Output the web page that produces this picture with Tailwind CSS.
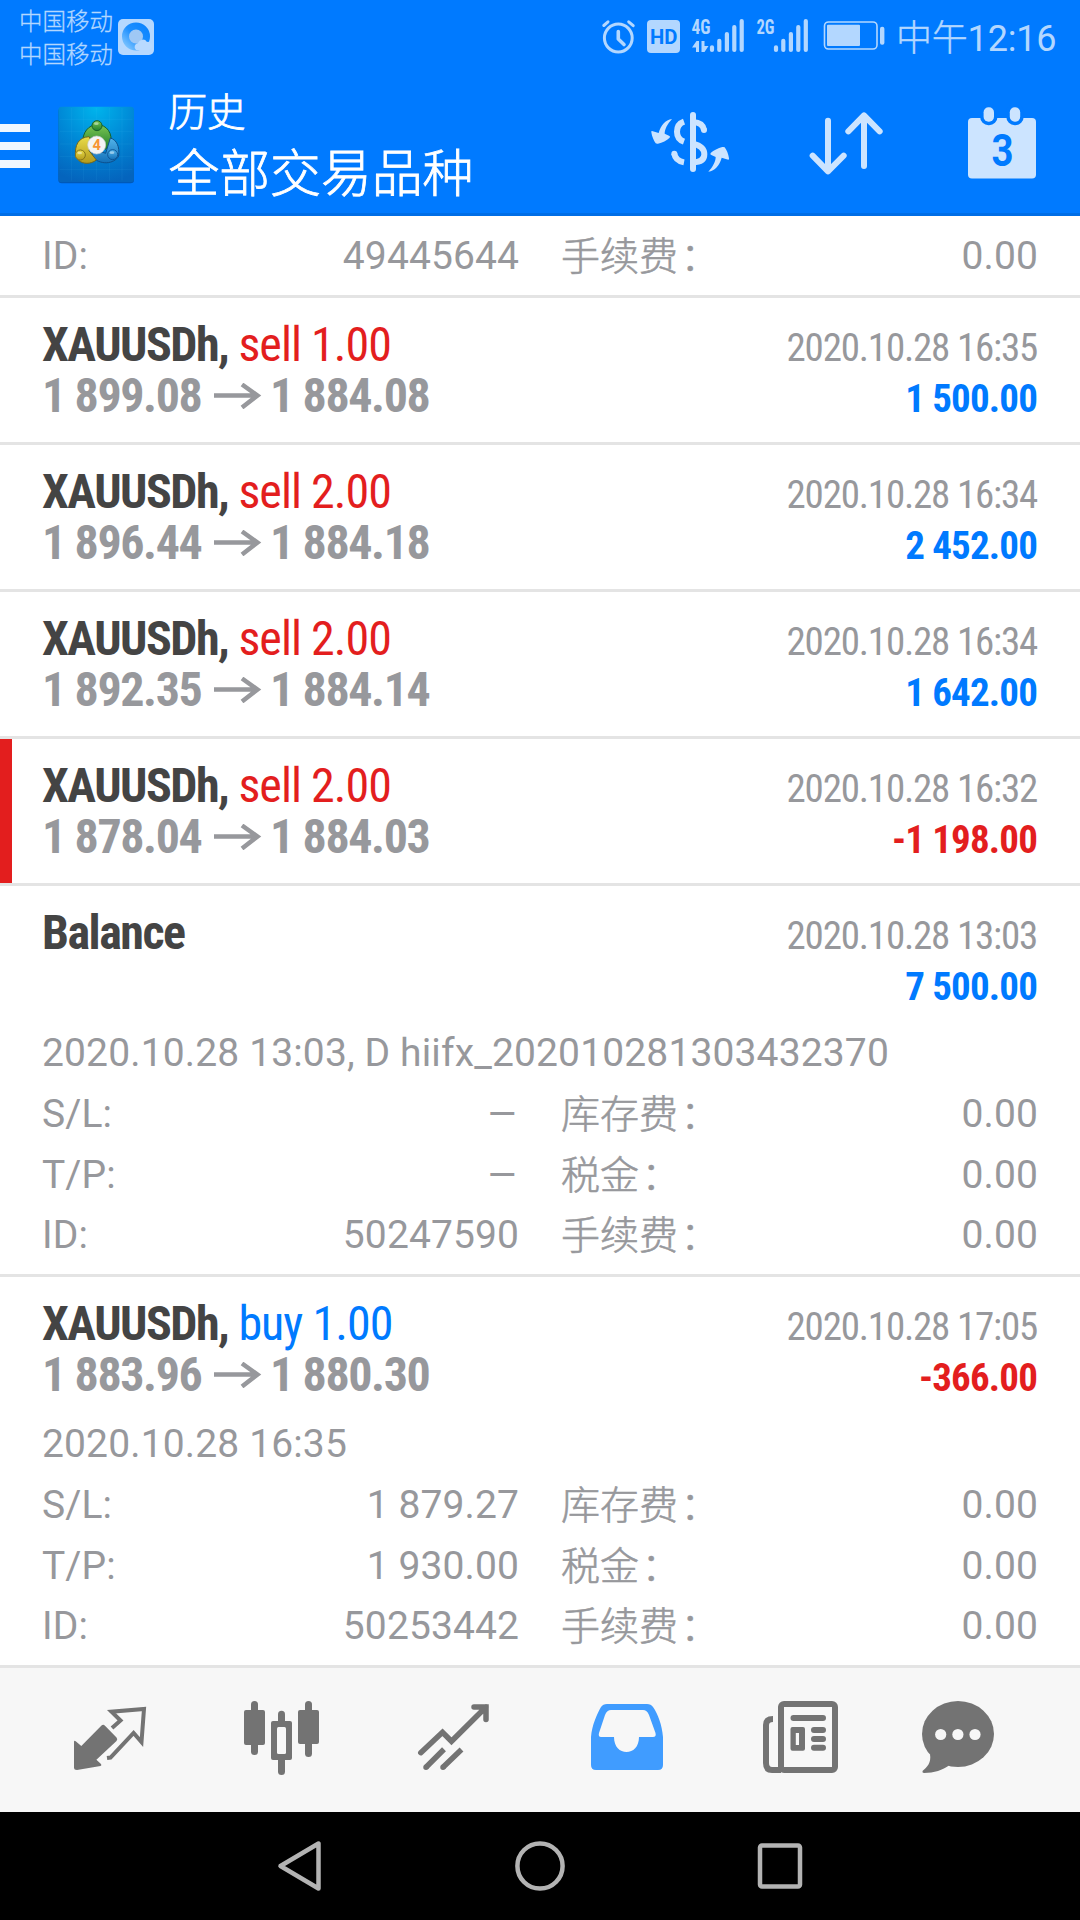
<!DOCTYPE html>
<html lang="zh-CN">
<head>
<meta charset="utf-8">
<title>历史</title>
<script src="https://cdn.jsdelivr.net/npm/@tailwindcss/browser@4"></script>
</head>
<body class="w-[1080px] h-[1920px] overflow-hidden bg-white font-['Roboto','Noto_Sans_CJK_SC',sans-serif] flex flex-col">

<header class="h-[216px] shrink-0 bg-[#007aff] border-b-[3px] border-[#006ee6] flex flex-col">
  <!-- status bar -->
  <div class="h-[74px] flex items-center text-[#b3d7ff]">
    <div class="ml-[19px] w-[99px] pt-[3px] text-[23.5px] leading-[33px] font-light [-webkit-text-stroke:0.3px]">
      <div>中国移动</div>
      <div>中国移动</div>
    </div>
    <svg class="w-9 h-9" viewBox="0 0 36 36">
      <defs>
        <linearGradient id="q" x1="1" y1="0" x2="0" y2="1"><stop offset="0" stop-color="#0b84ff"/><stop offset=".5" stop-color="#1d8fff"/><stop offset="1" stop-color="#7cc4ff"/></linearGradient>
      </defs>
      <rect width="36" height="36" rx="5" fill="#b5d8ff"/>
      <circle cx="18" cy="17.500" r="10.500" fill="#9fc8f5" stroke="url(#q)" stroke-width="7"/>
      <path d="M18 31a4 4 0 0 1 2-7 5 5 0 0 1 9-1 4 4 0 0 1 2 8z" fill="#b9daff"/>
    </svg>
    <svg class="ml-[446px] w-[290px] h-[60px]" viewBox="600 7 290 60" fill="#b3d7ff">
      <g fill="none" stroke="#b3d7ff" stroke-linecap="round">
        <circle cx="618.300" cy="38" r="13.900" stroke-width="3"/>
        <path d="M618.300 31.500V39L624 44.500" stroke-width="3.600" stroke-linejoin="round"/>
        <path d="M603.800 25.500L608 21.800M628.700 21.800L633.200 25.700" stroke-width="3"/>
      </g>
      <rect x="647" y="20" width="33" height="33" rx="4"/>
      <text x="650" y="44" fill="#007aff" class="font-['Roboto'] font-bold text-[20.5px]" textLength="27.500" lengthAdjust="spacingAndGlyphs">HD</text>
      <text x="691.500" y="34" class="font-['Roboto_Condensed','Roboto'] font-bold text-[20.5px]" textLength="19" lengthAdjust="spacingAndGlyphs">4G</text>
      <path d="M692 47.500L696.500 41H699V52H696V47.500ZM701.500 41H704.500V46H708.500L704.500 52H701.500Z"/>
      <g stroke="#b3d7ff" stroke-width="4.200" stroke-linecap="round">
        <path d="M712 47.300V49.900M719.300 40.800V49.900M726.900 34V49.900M734.300 27V49.900M741.700 21V49.900"/>
        <path d="M776 47.300V49.900M783.300 40.800V49.900M790.900 34V49.900M798.300 27V49.900M805.800 21V49.900"/>
      </g>
      <text x="756.500" y="34" class="font-['Roboto_Condensed','Roboto'] font-bold text-[20.5px]" textLength="18" lengthAdjust="spacingAndGlyphs">2G</text>
      <rect x="824.500" y="22" width="52.500" height="27" rx="4" fill="none" stroke="#b3d7ff" stroke-width="1.600"/>
      <rect x="827" y="24.700" width="33" height="21.300" rx="1"/>
      <rect x="880" y="26.700" width="4.400" height="18" rx="2"/>
    </svg>
    <div class="ml-[6px] pt-[3px] text-[36px] leading-[48px] tracking-[-0.2px] font-light whitespace-nowrap"><span class="[-webkit-text-stroke:0.4px]">中午</span><span class="font-normal">12:16</span></div>
  </div>

  <!-- app bar -->
  <div class="h-[139px] flex items-start">
    <div class="mt-[50px] w-[30px] flex flex-col gap-[10px]">
      <div class="h-2 bg-[#f0f7ff]"></div>
      <div class="h-2 bg-[#f0f7ff]"></div>
      <div class="h-2 bg-[#f0f7ff]"></div>
    </div>
    <svg class="ml-[20px] mt-[26px] w-[90px] h-[90px]" viewBox="-1 -2 270 270">
      <defs>
        <radialGradient id="bg" cx=".5" cy=".02" r="1"><stop offset="0" stop-color="#00b4ec"/><stop offset=".5" stop-color="#0088d6"/><stop offset="1" stop-color="#0464bd"/></radialGradient>
        <linearGradient id="gr" x1="0" y1="0" x2="0" y2="1"><stop offset="0" stop-color="#7cc653"/><stop offset="1" stop-color="#1f7f2c"/></linearGradient>
        <linearGradient id="ye" x1="0" y1="0" x2="0" y2="1"><stop offset="0" stop-color="#e9dc49"/><stop offset="1" stop-color="#b39a1c"/></linearGradient>
        <linearGradient id="bl" x1="0" y1="0" x2="0" y2="1"><stop offset="0" stop-color="#52b4ea"/><stop offset="1" stop-color="#126fb8"/></linearGradient>
      </defs>
      <rect x="24" y="23" width="227" height="225" rx="10" fill="#0059b8"/>
      <rect x="24" y="18" width="227" height="226" rx="10" fill="url(#bg)"/>
      <path d="M28 56H246M28 92H246M28 130H246M28 168H246M28 206H246M64 22V240M100 22V240M139 22V240M177 22V240M215 22V240" stroke="#5fd0ff" stroke-opacity=".13" stroke-width="2"/>
      <g stroke-width="3">
        <path d="M98 128C94 96 116 72 140 72C170 72 188 98 181 132L165 146L150 110H126Z" fill="url(#gr)" stroke="#17602a"/>
        <path d="M180 112C200 118 208 138 205 166C192 190 150 196 122 166L136 148L166 158Z" fill="url(#bl)" stroke="#0d4f8c"/>
        <path d="M76 168C72 134 84 110 116 108L126 126L116 150L138 178C120 192 98 190 86 180Z" fill="url(#ye)" stroke="#73661a"/>
        <circle cx="140" cy="75" r="15" fill="url(#gr)" stroke="#17602a"/>
        <circle cx="90" cy="163" r="15" fill="url(#ye)" stroke="#85741a"/>
        <circle cx="187" cy="162" r="15" fill="url(#bl)" stroke="#0d5698"/>
      </g>
      <g fill="#fff" fill-opacity=".45"><ellipse cx="138" cy="69" rx="7" ry="4"/><ellipse cx="88" cy="157" rx="7" ry="4"/><ellipse cx="185" cy="156" rx="7" ry="4"/></g>
      <circle cx="139" cy="133" r="27" fill="#f4f4f4" stroke="#c9cdd0" stroke-width="2"/>
      <text x="139" y="149" text-anchor="middle" fill="#f79433" class="font-['Roboto'] font-bold text-[44px]">4</text>
    </svg>
    <div class="ml-[28.5px] w-[473.5px] text-white font-light [-webkit-text-stroke:0.8px]">
      <div class="mt-[15px] text-[38.6px] leading-[48px]">历史</div>
      <div class="mt-[6px] text-[50.8px] leading-[64px]">全部交易品种</div>
    </div>
    <svg class="mt-[26px] -ml-[2px] w-[260px] h-[90px]" viewBox="0 0 780 270" fill="#cce4ff" stroke="none">
      <g fill="none" stroke="#cce4ff" stroke-width="18" stroke-linejoin="round">
        <path d="M159 45V207" stroke-linecap="round"/>
        <path d="M132 65C104 75 104 115 132 125M103 161C105 176 116 184 132 187"/>
        <path d="M159 66C178 67 190 76 192 90M159 131C184 137 193 150 193 163C193 178 182 187 159 187"/>
        <path d="M564 62V214M518 167L564 214L611 167M672 198V47M625 94L672 46L719 94" stroke-linecap="round"/>
      </g>
      <circle cx="103" cy="161" r="9"/><circle cx="192" cy="90" r="9"/>
      <path id="swap" d="M96 57C76 60 62 76 56 99L36 93Q33 93 34 97C36 110 41 122 47 130Q50 132 54 131C67 128 80 121 89 113Q92 109 87 107L74 101C74 88 82 72 96 57Z"/>
      <use href="#swap" transform="rotate(180 150.500 136)"/>
    </svg>
    <svg class="mt-[26px] ml-[60px] w-[90px] h-[90px]" viewBox="960 100 90 90" fill="#cce4ff">
      <rect x="968" y="118" width="68" height="60.500" rx="4"/>
      <g stroke="#007aff" stroke-width="7"><rect x="983.600" y="107.300" width="10.400" height="14.400" rx="5"/><rect x="1009.800" y="107.300" width="10.400" height="14.400" rx="5"/></g>
      <rect x="983.600" y="107.300" width="10.400" height="14.400" rx="5"/><rect x="1009.800" y="107.300" width="10.400" height="14.400" rx="5"/>
      <text x="991.500" y="165.500" fill="#007aff" class="font-['Roboto'] font-bold text-[44px]" textLength="22" lengthAdjust="spacingAndGlyphs">3</text>
    </svg>
  </div>
</header>

<main id="history" class="flex-1 flex flex-col text-[39px] text-[#97989c]"></main>

<!-- tab bar -->
<nav class="h-36 shrink-0 bg-[#f7f7f7] flex items-center pl-[65px] gap-[82px]">
  <svg class="w-[90px] h-[90px]" viewBox="65 1695 90 90" fill="#737373">
    <path d="M101.500 1725.500Q103.300 1724 105 1725.700L116.500 1737.500Q118 1739.300 116.500 1741L96.400 1759.700L101 1764Q102 1765.500 100.500 1766L77 1770Q74 1770 74 1767.500V1742Q74 1740 76 1741.500L81.300 1746Z"/>
    <path d="M112 1728L120.500 1720.500L111.500 1711.700L144 1709L141.500 1742L133.600 1733L110.500 1757.500L107 1758" fill="none" stroke="#737373" stroke-width="4"/>
  </svg>
  <svg class="w-[90px] h-[90px]" viewBox="237 1695 90 90" fill="#737373">
    <rect x="244" y="1710" width="21" height="35" rx="2"/><rect x="251" y="1701" width="7" height="54" rx="3.500"/>
    <rect x="298" y="1710" width="21" height="34" rx="2"/><rect x="305" y="1701" width="7" height="56" rx="3.500"/>
    <rect x="278" y="1710.700" width="7" height="64.300" rx="3.500"/><rect x="271" y="1721" width="21" height="39" rx="2"/>
    <rect x="277" y="1727" width="9" height="27" rx="1.500" fill="#f7f7f7"/>
  </svg>
  <svg class="w-[90px] h-[90px]" viewBox="409 1695 90 90" fill="none" stroke="#737373" stroke-width="5.500">
    <path d="M420.800 1752.700L442.500 1732.300L451.500 1741.300L486 1707M474 1707H486V1719.500" stroke-linecap="round"/>
    <path d="M426 1767.300L444 1749.300M443 1767.300L461.500 1749.500"/>
    <path d="M426 1767.300h.01M443 1767.300h.01" stroke-linecap="round"/>
  </svg>
  <svg class="w-[90px] h-[90px]" viewBox="581 1695 90 90" fill="#409cff">
    <path fill-rule="evenodd" d="M591 1737C592 1725 597 1714 601 1707Q603 1704 607 1704H647Q651 1704 653 1707C658 1714 662 1725 663 1737V1765Q663 1770 658 1770H596Q591 1770 591 1765ZM614 1737H601Q598 1737 599 1733L605 1715Q607 1710 611 1710H643Q647 1710 649 1715L655.500 1733Q656.500 1737 653 1737H639C639 1747 633 1752 626.500 1752C620 1752 614 1747 614 1737Z"/>
  </svg>
  <svg class="w-[90px] h-[90px]" viewBox="753 1695 90 90" fill="none" stroke="#737373" stroke-width="6">
    <rect x="781" y="1704" width="54" height="66" rx="3"/>
    <path d="M773 1719Q766 1719 766 1725V1763Q766 1770 772 1770H781"/>
    <path d="M793.500 1718H823M814 1730H823M814 1739H823M814 1747.800H823" stroke-linecap="round"/>
    <path fill="#737373" fill-rule="evenodd" stroke="none" d="M792.500 1727H803Q805 1727 805 1729V1748.700Q805 1750.700 803 1750.700H792.500Q790.500 1750.700 790.500 1748.700V1729Q790.500 1727 792.500 1727ZM795.800 1733V1745H799V1733Z"/>
  </svg>
  <svg class="-ml-[15px] w-[90px] h-[90px]" viewBox="910 1695 90 90" fill="#737373">
    <ellipse cx="958" cy="1734" rx="36" ry="33"/>
    <path d="M930 1754C931.500 1763 927 1767 922.500 1771Q922 1773 924 1773C934 1773 943 1770 949 1765.500Z"/>
    <g fill="#f7f7f7"><circle cx="940.700" cy="1734.500" r="5.600"/><circle cx="957.900" cy="1734.500" r="5.600"/><circle cx="975" cy="1734.500" r="5.600"/></g>
  </svg>
</nav>

<!-- system navigation -->
<footer class="h-[108px] shrink-0 bg-black flex items-center justify-center gap-[180px]">
  <svg class="w-[60px] h-[60px]" viewBox="270 1836 60 60" fill="none" stroke="#b3b3b3" stroke-width="4.500" stroke-linejoin="round"><path d="M280.500 1866L318.500 1843.500V1888.500Z"/></svg>
  <svg class="w-[60px] h-[60px]" viewBox="510 1836 60 60" fill="none" stroke="#b3b3b3" stroke-width="4.500"><circle cx="540" cy="1866" r="22.600"/></svg>
  <svg class="w-[60px] h-[60px]" viewBox="750 1836 60 60" fill="none" stroke="#b3b3b3" stroke-width="4.500"><rect x="760" y="1845.500" width="40" height="41" rx="2"/></svg>
</footer>

<script>
const RED = 'text-[#e31e1e]', BLUE = 'text-[#007aff]';
const arrow = `<svg class="w-[56px] h-[26px]" viewBox="0 0 56 26" fill="none" stroke="#97989c" stroke-width="4.500"><path d="M0 12.500H43M28 1.500L43.500 12.500L28 24.500"/></svg>`;

const summary = d => `
  <div class="h-[51px] leading-[51px] flex items-baseline justify-between font-['Roboto_Condensed','Roboto']">
    <div class="text-5xl leading-[51px] tracking-[-0.95px]"><b class="text-[#444] tracking-[-1.5px]">${d.name}</b> <span class="${d.sideColor || ''}">${d.side || ''}</span></div>
    <span class="mr-px tracking-[-1.2px]">${d.time}</span>
  </div>
  <div class="h-[51px] leading-[51px] flex items-baseline justify-between font-bold font-['Roboto_Condensed','Roboto']">
    <div class="flex items-center text-5xl leading-[51px] tracking-[-1.4px]">${d.from ? `<span class="w-[172px]">${d.from}</span>${arrow}<span>${d.to}</span>` : '&nbsp;'}</div>
    <span class="mr-px tracking-[-0.85px] ${d.color}">${d.profit}</span>
  </div>`;

const dash = `<span class="origin-right scale-x-125">–</span>`;
const line = (k, v, label) => `
  <div class="flex justify-between"><span>${k}</span>${v === '–' ? dash : `<span>${v}</span>`}</div>
  <div class="flex justify-between"><span class="pt-px font-light tracking-normal [-webkit-text-stroke:0.6px]">${label}<span class="pl-[2.5px]">：</span></span><span>0.00</span></div>`;
const grid = rows => `<div class="h-[182.25px] grid auto-rows-[60.75px] grid-cols-[477px_1fr] gap-x-[42px] tracking-[0.1px]">${rows}</div>`;

const deals = [
  {name:'XAUUSDh,', side:'sell 1.00', sideColor:RED, time:'2020.10.28 16:35', from:'1 899.08', to:'1 884.08', profit:'1 500.00', color:BLUE},
  {name:'XAUUSDh,', side:'sell 2.00', sideColor:RED, time:'2020.10.28 16:34', from:'1 896.44', to:'1 884.18', profit:'2 452.00', color:BLUE},
  {name:'XAUUSDh,', side:'sell 2.00', sideColor:RED, time:'2020.10.28 16:34', from:'1 892.35', to:'1 884.14', profit:'1 642.00', color:BLUE},
  {name:'XAUUSDh,', side:'sell 2.00', sideColor:RED, time:'2020.10.28 16:32', from:'1 878.04', to:'1 884.03', profit:'-1 198.00', color:RED, mark:true},
  {name:'Balance', time:'2020.10.28 13:03', profit:'7 500.00', color:BLUE, comment:'2020.10.28 13:03, D hiifx_202010281303432370', sl:'–', tp:'–', id:'50247590'},
  {name:'XAUUSDh,', side:'buy 1.00', sideColor:BLUE, time:'2020.10.28 17:05', from:'1 883.96', to:'1 880.30', profit:'-366.00', color:RED, comment:'2020.10.28 16:35', sl:'1 879.27', tp:'1 930.00', id:'50253442'},
];

document.getElementById('history').innerHTML =
  `<section class="h-[82px] overflow-hidden border-b-[3px] border-[#e4e4e4] px-[42px] pt-[10px] leading-[60.75px]">${grid(line('ID:', '49445644', '手续费'))}</section>` +
  deals.map(d => `
  <section class="${d.id ? 'h-[391px]' : 'h-[147px]'} border-b-[3px] border-[#e4e4e4] flex">
    <div class="w-3 ${d.mark ? 'bg-[#e31e1e]' : ''}"></div>
    <div class="flex-1 pl-[30px] pr-[42px] pt-[21px]">
      ${summary(d)}
      ${d.id ? `<div class="mt-[14px] leading-[60.75px]"><div class="tracking-[0.14px]">${d.comment}</div>${grid(
        line('S/L:', d.sl, '库存费') + line('T/P:', d.tp, '税金') + line('ID:', d.id, '手续费'))}</div>` : ''}
    </div>
  </section>`).join('');
</script>
</body>
</html>
